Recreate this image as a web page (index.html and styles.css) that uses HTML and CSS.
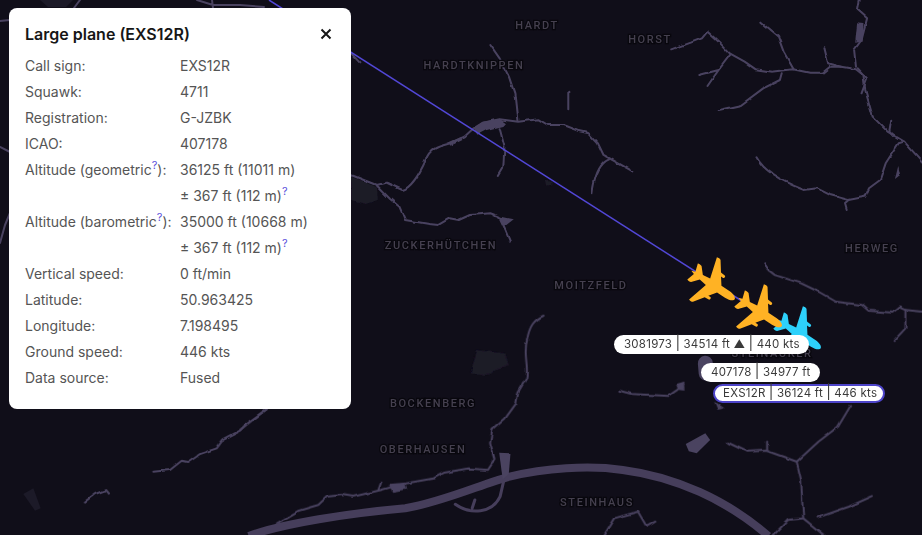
FILE: index.html
```html
<!DOCTYPE html>
<html lang="en">
<head>
<meta charset="utf-8">
<title>Large plane (EXS12R)</title>
<link rel="stylesheet" href="styles.css">
</head>
<body>
<main class="map">
  <svg class="map-canvas" width="922" height="535" viewBox="0 0 922 535" xmlns="http://www.w3.org/2000/svg">
    <defs>
      <path id="plane" d="M0,-26 C2.2,-26 3.9,-22 4,-17 L4,-7.5 L11.5,-2 L11.5,-4.5 C11.5,-6 14.5,-6 14.5,-4.5 L14.8,0.2 L25,7.5 C25.8,8.5 25.8,10.5 25.2,12 L3.9,6 L2.8,14 L9.5,20 C10.1,21.3 10.1,23 9.5,24.5 L1.4,22 L0,26 L-1.4,22 L-9.5,24.5 C-10.1,23 -10.1,21.3 -9.5,20 L-2.8,14 L-3.9,6 L-25.2,12 C-25.8,10.5 -25.8,8.5 -25,7.5 L-14.8,0.2 L-14.5,-4.5 C-14.5,-6 -11.5,-6 -11.5,-4.5 L-11.5,-2 L-4,-7.5 L-4,-17 C-3.9,-22 -2.2,-26 0,-26 Z"/>
      <filter id="wobble" filterUnits="userSpaceOnUse" x="0" y="0" width="922" height="535">
        <feTurbulence type="fractalNoise" baseFrequency="0.09" numOctaves="2" seed="4"/>
        <feDisplacementMap in="SourceGraphic" scale="3.5" xChannelSelector="R" yChannelSelector="G"/>
      </filter>
    </defs>

    <g filter="url(#wobble)">
      <g transform="translate(340,0) scale(0.3712,0.3333)">
        <path class="area-dim" d="M30,530 L100,562 L102,600 L70,612 L30,600 Z"/>
        <path class="area-dim" d="M552,542 L572,545 L572,558 L555,560 Z"/>
        <path class="road" d="M30,525 L98,555 L125,548 L168,570 C190,565 215,520 232,478 C240,450 260,440 290,432 L335,410 L360,385 L385,368 L430,358 L480,365 L535,358 L560,375 L600,375 L640,392 L670,400 L695,430 L710,465 L790,515"/>
        <path class="road" d="M725,478 C700,490 685,530 680,580"/>
        <path class="road" d="M405,135 L430,175 L455,230 L470,280 L478,362"/>
        <path class="road" d="M430,385 L443,440 L440,500 L425,528"/>
        <path class="road" d="M615,278 L615,328"/>
        <path class="road" d="M98,555 L135,597 L160,620 L175,660 L240,672 L265,675 L295,655 L320,660 L350,645 L405,640 L430,650"/>
        <path class="road" d="M432,660 L445,690 L458,725"/>
        <path class="area" d="M360,385 L385,365 L430,356 L447,370 L440,378 L395,390 L370,404 Z"/>
        <path class="area" d="M292,430 L325,412 L330,420 L298,437 Z"/>
        <path class="area" d="M425,648 L468,658 L442,680 Z"/>
        <path class="road" d="M30,160 L55,190"/>
        <path class="road" d="M895,148 L945,128 L975,115 L990,95 L1020,125 L1050,160 L1090,185 L1120,208 L1165,215 L1220,208 L1265,218 L1300,218 L1320,200 L1350,200 L1390,208 L1410,225 L1415,270 L1430,330 L1435,350 L1475,395 L1520,425 L1568,485"/>
        <path class="road" d="M1052,163 L1020,210 L990,258 M1020,210 L968,225"/>
        <path class="road" d="M1135,68 L1180,110 L1195,155 L1222,208"/>
        <path class="road" d="M1190,220 L1185,240 L1140,265 L1080,315 L1020,330"/>
        <path class="road" d="M1305,145 L1315,190 L1350,200"/>
        <path class="road" d="M1400,0 L1395,30 L1420,55 L1405,120 L1385,150 L1390,200"/>
        <path class="area" d="M1393,70 L1410,72 L1408,125 L1388,128 Z"/>
        <path class="road" d="M1395,205 L1420,235 L1405,280"/>
        <path class="road" d="M1122,472 C1140,510 1190,545 1250,570 L1285,565 L1320,585 L1370,600 L1415,590 L1425,565 L1455,540 L1470,490 L1505,430 L1520,425"/>
        <path class="road" d="M1370,600 L1360,610 L1365,630"/>
        <path class="road" d="M1485,362 L1480,395 L1490,408"/>
        <path class="area" d="M1504,498 L1509,525 L1495,537 Z"/>
        <path class="road" d="M1143,790 L1155,810"/>
      </g>

      <g transform="translate(240,270) scale(0.4349,0.3333)">
        <path class="area-dim" d="M530,310 L545,240 L610,250 L618,285 L570,315 Z"/>
        <path class="road" d="M1215,0 L1230,15 L1290,40 L1330,65 L1370,95 L1430,105 L1445,122 L1500,128 L1515,112 L1530,120 L1568,125"/>
        <path class="road" d="M1530,120 L1530,175 L1505,210"/>
        <path class="road" d="M698,137 C675,150 665,170 660,210 C650,250 665,290 658,325 L640,365 L635,400 L610,445 L580,480 L575,520 L585,570 L570,600 L525,595 L470,608 L445,625 L380,640 L325,660 L260,680 L235,675 L200,680 L180,705 L135,722 L85,760"/>
        <path class="road" d="M325,635 L318,660"/>
        <path class="area" d="M342,642 L378,638 L382,658 L350,666 Z"/>
        <path class="area" d="M1090,395 L1112,415 L1098,420 Z"/>
        <path class="road" d="M872,362 L900,372 L985,378 L1005,360 L1020,342"/>
        <path class="area" d="M1003,345 L1021,338 L1022,362 L1008,360 Z"/>
        <path class="road" d="M1122,518 L1165,545 L1210,542 L1280,575 L1290,630 L1295,745 L1345,798"/>
        <path class="road" d="M1212,515 L1212,542"/>
        <path class="road" d="M1280,575 L1330,515 L1375,470 L1405,405"/>
        <path class="road" d="M1295,745 L1260,750 L1225,798"/>
        <path class="road" d="M1330,742 L1400,710 L1455,678"/>
        <path class="road" d="M835,798 L860,745 L915,725 L935,770 L955,755"/>
        <path class="road" d="M0,480 L60,418"/>
      </g>

      <g transform="translate(0,400) scale(0.3333)">
        <path class="road" d="M800,28 L740,70 L720,92 L670,118 L650,145 L600,162 L565,186 L545,182 L510,210 L460,215"/>
        <path class="road" d="M255,305 L285,282 L318,270 L328,282"/>
      </g>
    </g>

    <g transform="translate(240,270) scale(0.4349,0.3333)">
      <path class="motorway" d="M20,798 C100,760 250,730 380,715 C470,695 560,640 620,620 C700,595 800,585 880,600 C1000,620 1120,690 1215,798"/>
      <path class="area" d="M596,548 L622,550 L618,612 L604,628 Z"/>
      <path class="ramp" d="M495,703 C530,735 580,730 598,680 L606,635 M540,690 L534,714"/>
      <path class="lake" d="M1070,280 L1072,310"/>
      <path class="area" d="M1025,522 L1070,490 L1081,510 L1050,550 L1032,544 Z"/>
    </g>
    <path class="area-dim" transform="translate(0,400) scale(0.3333)" d="M70,282 L100,265 L122,325 L105,332 Z"/>

    <path class="road" d="M0,147 L10,152"/>
    <path class="road" d="M10,213 L5,225 L0,243"/>
    <path class="road" d="M0,21 L10,20"/>
    <path class="road" d="M80,0 L74,8"/>
    <path class="road" d="M197,0 L213,5 L240,5 L264,7 M212,0 L213,8"/>
    <path class="area-dim" d="M40,0 L73,0 L66,7 L48,7 Z"/>

    <text class="place" x="537" y="29">HARDT</text>
    <text class="place" x="650" y="43">HORST</text>
    <text class="place" x="474" y="69">HARDTKNIPPEN</text>
    <text class="place" x="441" y="249">ZUCKERHÜTCHEN</text>
    <text class="place" x="872" y="252">HERWEG</text>
    <text class="place" x="591" y="289">MOITZFELD</text>
    <text class="place" x="433" y="407">BOCKENBERG</text>
    <text class="place" x="423" y="453">OBERHAUSEN</text>
    <text class="place" x="597" y="506">STEINHAUS</text>
    <text class="place" x="772" y="357">STEINACKER</text>

    <line class="track" x1="269" y1="0" x2="745" y2="303"/>

    <use class="plane-selected" href="#plane" transform="translate(799,334) rotate(123.5)"/>
    <use class="plane-other" href="#plane" transform="translate(713,285) rotate(123.5)"/>
    <use class="plane-other" href="#plane" transform="translate(760,312) rotate(123.5)"/>
  </svg>

  <div class="pill pill-a">3081973 <span class="sep">|</span> 34514 ft ▲ <span class="sep">|</span> 440 kts</div>
  <div class="pill pill-b">407178 <span class="sep">|</span> 34977 ft</div>
  <div class="pill pill-c">EXS12R <span class="sep">|</span> 36124 ft <span class="sep">|</span> 446 kts</div>

  <section class="panel">
    <header class="panel-head">
      <h1 class="panel-title">Large plane (EXS12R)</h1>
      <svg class="close" width="12" height="12" viewBox="0 0 12 12" xmlns="http://www.w3.org/2000/svg"><path d="M1.5,1.5 L10.5,10.5 M10.5,1.5 L1.5,10.5"/></svg>
    </header>
    <dl class="details">
      <dt>Call sign:</dt><dd>EXS12R</dd>
      <dt>Squawk:</dt><dd>4711</dd>
      <dt>Registration:</dt><dd>G-JZBK</dd>
      <dt>ICAO:</dt><dd>407178</dd>
      <dt>Altitude (geometric<sup class="hint">?</sup>):</dt><dd>36125 ft (11011 m)</dd>
      <dt></dt><dd>± 367 ft (112 m)<sup class="hint">?</sup></dd>
      <dt>Altitude (barometric<sup class="hint">?</sup>):</dt><dd>35000 ft (10668 m)</dd>
      <dt></dt><dd>± 367 ft (112 m)<sup class="hint">?</sup></dd>
      <dt>Vertical speed:</dt><dd>0 ft/min</dd>
      <dt>Latitude:</dt><dd>50.963425</dd>
      <dt>Longitude:</dt><dd>7.198495</dd>
      <dt>Ground speed:</dt><dd>446 kts</dd>
      <dt>Data source:</dt><dd>Fused</dd>
    </dl>
  </section>
</main>
</body>
</html>
```
FILE: styles.css
```css
html, body {
  margin: 0;
  padding: 0;
  background: #100e19;
}

.map {
  position: relative;
  width: 922px;
  height: 535px;
  overflow: hidden;
  background: #100e19;
  font-family: Inter, "Liberation Sans", sans-serif;
}

.map-canvas {
  position: absolute;
  inset: 0;
  display: block;
}

.road {
  fill: none;
  stroke: #4a4360;
  stroke-width: 2;
  stroke-linejoin: round;
  stroke-linecap: round;
  vector-effect: non-scaling-stroke;
}

.motorway {
  fill: none;
  stroke: #463e5b;
  stroke-width: 8;
  vector-effect: non-scaling-stroke;
}

.ramp {
  fill: none;
  stroke: #463e5b;
  stroke-width: 3;
  stroke-linecap: round;
  vector-effect: non-scaling-stroke;
}

.lake {
  fill: none;
  stroke: #4a4360;
  stroke-width: 15;
  stroke-linecap: round;
  vector-effect: non-scaling-stroke;
}

.area { fill: #4a4360; }
.area-dim { fill: #1c1a28; }

.place {
  font-family: Roboto, "Liberation Sans", sans-serif;
  font-size: 11px;
  font-weight: 500;
  letter-spacing: 1.6px;
  text-anchor: middle;
  fill: #45404f;
  stroke: #08070d;
  stroke-width: 2.5px;
  paint-order: stroke;
}

.track {
  stroke: #5247d6;
  stroke-width: 1.5;
}

.plane-other { fill: #ffb224; }
.plane-selected { fill: #2dd1fb; }

.pill {
  position: absolute;
  box-sizing: border-box;
  height: 19px;
  line-height: 19px;
  padding: 0 10px;
  border-radius: 10px;
  background: #fff;
  color: #3a3a3a;
  font-size: 11.5px;
  letter-spacing: 0.25px;
  white-space: nowrap;
}

.sep {
  font-size: 14px;
  line-height: 0;
  margin: 0 -0.3px;
}

.pill-a { left: 614px; top: 335px; width: 195px; }
.pill-b { left: 701px; top: 363px; width: 119px; }
.pill-c {
  left: 713px;
  top: 384px;
  width: 172px;
  line-height: 15px;
  padding: 0 8px;
  border: 2px solid #4d44c9;
}

.panel {
  position: absolute;
  left: 9px;
  top: 8px;
  box-sizing: border-box;
  width: 342px;
  height: 401px;
  padding: 16px;
  border-radius: 8px;
  background: #fff;
}

.panel-head {
  display: flex;
  align-items: center;
  justify-content: space-between;
  height: 20px;
  margin-bottom: 9px;
}

.panel-title {
  margin: 0;
  font-size: 16px;
  font-weight: 600;
  line-height: 20px;
  color: #161616;
}

.close {
  display: block;
  margin-right: 3px;
}

.close path {
  fill: none;
  stroke: #161616;
  stroke-width: 2;
}

.details {
  display: grid;
  grid-template-columns: 155px 1fr;
  grid-auto-rows: 26px;
  margin: 0;
  font-size: 14px;
  line-height: 26px;
  color: #555;
}

.details dt,
.details dd {
  margin: 0;
  white-space: nowrap;
}

.hint {
  font-size: 11px;
  line-height: 0;
  vertical-align: 6px;
  color: #5b50dc;
}
```
